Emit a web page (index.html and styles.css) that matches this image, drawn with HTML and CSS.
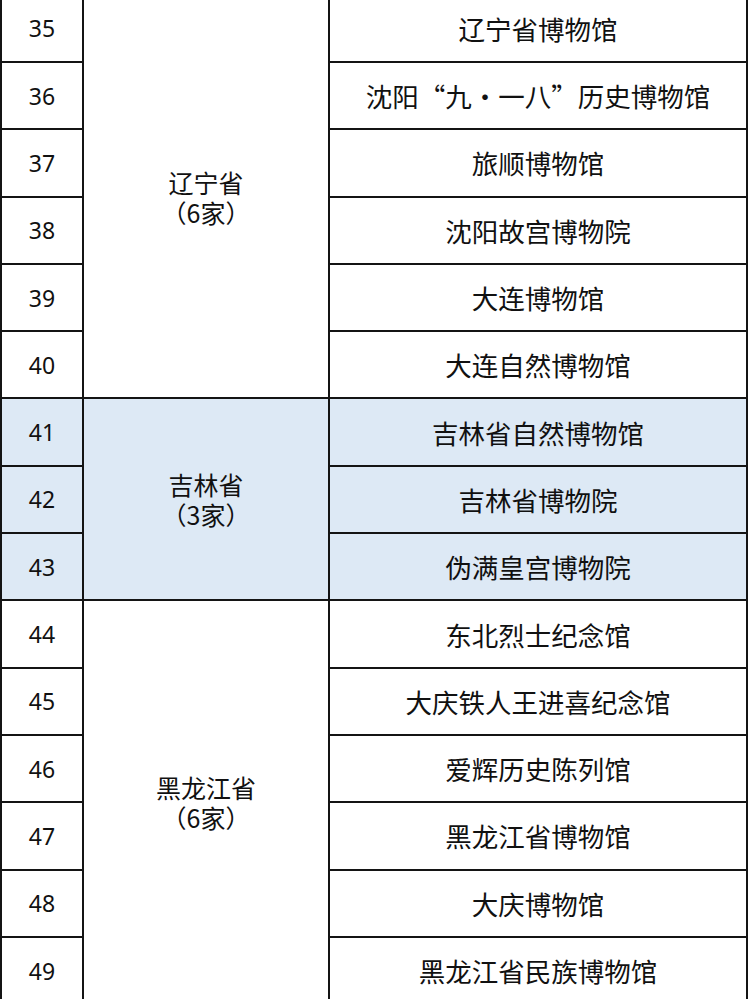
FILE: index.html
```html
<!DOCTYPE html>
<html lang="zh-CN">
<head>
<meta charset="utf-8">
<title>博物馆名单</title>
<link rel="stylesheet" href="styles.css">
</head>
<body>
<div class="table">
  <div class="cell num">35</div>
  <div class="cell prov span6"><span class="line">辽宁省</span><span class="line">（6家）</span></div>
  <div class="cell name">辽宁省博物馆</div>
  <div class="cell num">36</div>
  <div class="cell name">沈阳“九·一八”历史博物馆</div>
  <div class="cell num">37</div>
  <div class="cell name">旅顺博物馆</div>
  <div class="cell num">38</div>
  <div class="cell name">沈阳故宫博物院</div>
  <div class="cell num">39</div>
  <div class="cell name">大连博物馆</div>
  <div class="cell num">40</div>
  <div class="cell name">大连自然博物馆</div>

  <div class="cell num blue">41</div>
  <div class="cell prov span3 blue"><span class="line">吉林省</span><span class="line">（3家）</span></div>
  <div class="cell name blue">吉林省自然博物馆</div>
  <div class="cell num blue">42</div>
  <div class="cell name blue">吉林省博物院</div>
  <div class="cell num blue">43</div>
  <div class="cell name blue">伪满皇宫博物院</div>

  <div class="cell num">44</div>
  <div class="cell prov span6"><span class="line">黑龙江省</span><span class="line">（6家）</span></div>
  <div class="cell name">东北烈士纪念馆</div>
  <div class="cell num">45</div>
  <div class="cell name">大庆铁人王进喜纪念馆</div>
  <div class="cell num">46</div>
  <div class="cell name">爱辉历史陈列馆</div>
  <div class="cell num">47</div>
  <div class="cell name">黑龙江省博物馆</div>
  <div class="cell num">48</div>
  <div class="cell name">大庆博物馆</div>
  <div class="cell num">49</div>
  <div class="cell name">黑龙江省民族博物馆</div>
</div>
</body>
</html>
```
FILE: styles.css
```css
html, body {
  margin: 0;
  padding: 0;
  background: #ffffff;
  overflow: hidden;
}
.table {
  display: grid;
  grid-template-columns: 80px 244px 416px;
  grid-auto-rows: 65.3px;
  gap: 2px;
  padding: 2px;
  width: 744px;
  margin-top: -6.3px;
  background: #141414;
  font-family: "Noto Sans CJK SC", "Noto Sans", sans-serif;
  color: #111111;
}
.cell {
  background: #ffffff;
  display: flex;
  align-items: center;
  justify-content: center;
  text-align: center;
}
.cell.blue {
  background: #dde9f5;
}
.num {
  font-family: "Noto Sans", "DejaVu Sans", sans-serif;
  font-size: 23px;
}
.name {
  font-size: 26.5px;
}
.prov {
  flex-direction: column;
  font-size: 25px;
}
.line {
  display: block;
  height: 30px;
  line-height: 30px;
}
.span6 {
  grid-row: span 6;
}
.span3 {
  grid-row: span 3;
}
```
